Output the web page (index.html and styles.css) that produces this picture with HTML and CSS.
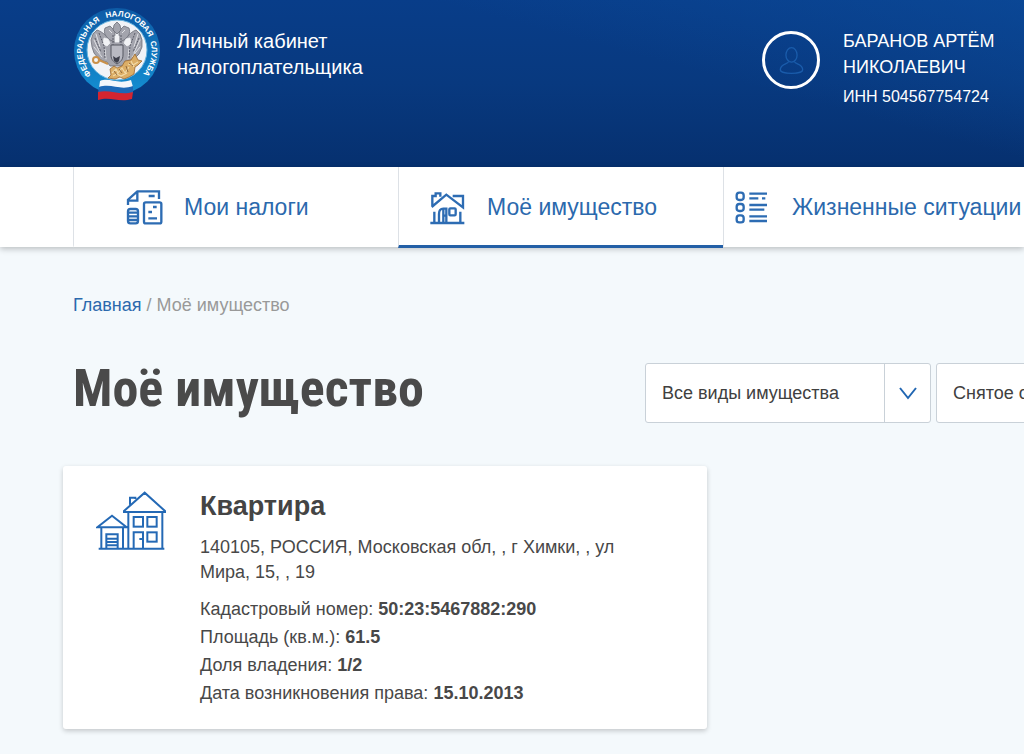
FILE: index.html
```html
<!DOCTYPE html>
<html lang="ru">
<head>
<meta charset="utf-8">
<meta name="viewport" content="width=device-width, initial-scale=1">
<title>Моё имущество</title>
<link rel="stylesheet" href="styles.css">
</head>
<body>
<header class="header">
  <a class="brand" href="#">
    <svg class="emblem" viewBox="0 0 90 94" aria-hidden="true">
      <defs>
        <path id="ring" d="M20.500 69.500A34.600 34.600 0 1 1 69.500 69.500"/>
        <linearGradient id="rim" x1="0" y1="0" x2="0" y2="1"><stop offset="0" stop-color="#0d5ba6"/><stop offset="1" stop-color="#148fd2"/></linearGradient>
      </defs>
      <circle cx="45" cy="45" r="43" fill="url(#rim)"/>
      <circle cx="45" cy="44" r="30" fill="#f1f3f7" stroke="#69b5e0" stroke-width="1"/>
      <text class="emblem-text"><textPath href="#ring" startOffset="20%">ФЕДЕРАЛЬНАЯ</textPath></text>
      <text class="emblem-text"><textPath href="#ring" startOffset="59%">НАЛОГОВАЯ</textPath></text>
      <text class="emblem-text"><textPath href="#ring" startOffset="88%">СЛУЖБА</textPath></text>
      <g fill="#a3a4ad" stroke="#62646f" stroke-width=".7" stroke-linejoin="round">
        <path d="M41 34C36 33 32 26 25 24L21 28 19 34 20 41 22 47 26 52 31 55 35 56 38 60H52L56 56 62 53 67 48 70 41 70 34 68 28 64 24C58 26 54 33 49 34Z"/>
        <path d="M38 34C34 31 31 27 33 22L38 20 43 25 43 36ZM52 34C56 31 59 27 57 22L52 20 47 25 47 36Z"/>
        <path d="M41 24 42 19 45 16 48 19 49 24 45 28Z"/>
      </g>
      <path d="m32 32 4 1 2 4-3 3-4-2ZM58 32l-4 1-2 4 3 3 4-2ZM37 24l3 3M53 24l-3 3M43 30h4v6h-4Z" fill="#f1f2f5" stroke="#f1f2f5" stroke-width=".8"/>
      <g fill="none" stroke="#dfe0e4" stroke-width="1" stroke-linecap="round">
        <path d="M24 28 28 41M22 34 28 47M22 41 30 51M66 28 62 41M68 34 62 47M68 41 60 51M33 43 34 53M57 43 56 53"/>
      </g>
      <g fill="none" stroke="#5b5d69" stroke-width="1" stroke-dasharray="2 1">
        <path d="M27 27 32 40 33 52M23 32 29 46M63 27 58 40 57 52M67 32 61 46M41 29v10M49 29v10"/>
      </g>
      <path d="M39 39h12v10c0 5-3 7-6 9-3-2-6-4-6-9Z" fill="#b9bac3" stroke="#545660"/>
      <path d="m41 50 3 2 4-2-1 5-2 2-3-2Z" fill="#3e404c"/>
      <g fill="#dcae66" stroke="#9b6830" stroke-width=".8" stroke-linejoin="round">
        <path d="m38 63 4-3 3 2 5-2 3-5 6-1 4-6 3 6 4 1-4 4-3 2-1 7-5 3-5 2-4-2-5 2-7-1 3-3Z"/>
      </g>
      <path d="m40 67 4-4 2 4 4-5 3 5 4-6M41 70l4-2 4 2 6-3M56 58l5 1 5-3M59 55l3 6" fill="none" stroke="#f1d9a6" stroke-width="1.200"/>
      <path d="m42 65 3 4m2-6 3 4m4-7 2 6m1-9 4 3" fill="none" stroke="#7e5730" stroke-width=".8"/>
      <g fill="none" stroke="#c99049" stroke-width="2">
        <circle cx="24" cy="54" r="3"/>
        <path d="m27 54 9 4"/>
      </g>
      <path d="M28 75c10-4 17 4 31-1l2 7c-12 4-21-3-34 1Z" fill="#f3f6fb"/>
      <path d="M27 81c13-4 21 4 34-1l0 7c-13 4-22-3-35 0Z" fill="#1d68b6"/>
      <path d="M26 86c12-3 22 4 35 0l-1 7c-14 4-21-3-34 1Z" fill="#d42530"/>
    </svg>
    <span class="brand-name">Личный кабинет<br>налогоплательщика</span>
  </a>
  <div class="user">
    <button class="avatar" type="button" aria-label="Профиль">
      <svg viewBox="112 90 76 88" aria-hidden="true"><ellipse cx="150" cy="117" rx="17" ry="22"/><path d="M141 137c0 9-25 6-25 25 0 15 68 15 68 0 0-19-25-16-25-25"/></svg>
    </button>
    <div class="user-info">
      <div class="user-name">БАРАНОВ АРТЁМ НИКОЛАЕВИЧ</div>
      <div class="user-inn">ИНН 504567754724</div>
    </div>
  </div>
</header>
<nav class="nav" aria-label="Разделы">
  <a class="tab tab-taxes" href="#">
    <svg class="tab-icon" viewBox="200 86 114 111" aria-hidden="true"><path d="M206 134V118L234 93H299V116M234 93V121H206M268 107H286M281 140H292M267 155H278M267 174H293M206 157H236M206 168H236M206 179H236"/><rect x="254" y="126" width="52" height="63" rx="5"/><rect x="206" y="146" width="30" height="43" rx="7"/></svg>
    <span>Мои налоги</span>
  </a>
  <a class="tab tab-property" href="#" aria-current="page">
    <svg class="tab-icon" viewBox="118 86 114 111" aria-hidden="true"><path d="M122 188H224M134 154V186M212 154V186M128 138V107H138V99H152V109M126 140 170 103 220 141V107H189M148 187V161Q148 145 161 145H170V187M161 147V187M161 166H170"/><rect x="179" y="144" width="19" height="21" rx="3"/></svg>
    <span>Моё имущество</span>
  </a>
  <a class="tab tab-events" href="#">
    <svg class="tab-icon" viewBox="77 86 114 111" aria-hidden="true"><rect x="82" y="97" width="21" height="22" rx="8"/><rect x="82" y="131" width="21" height="21" rx="8"/><rect x="82" y="165" width="21" height="21" rx="8"/><path d="M120 100H173M120 114H147M158 114H168M120 134H173M120 148H165M120 168H173M120 182H173"/></svg>
    <span>Жизненные ситуации</span>
  </a>
</nav>
<main class="main">
  <nav class="crumbs" aria-label="Навигация"><a href="#">Главная</a> / <span>Моё имущество</span></nav>
  <div class="title-row">
    <h1>Моё имущество</h1>
    <div class="filters">
      <div class="filter">
        <select aria-label="Вид имущества"><option>Все виды имущества</option></select>
        <span class="filter-arrow"><svg viewBox="0 0 20 14" aria-hidden="true"><path d="M2 2 10 12 18 2"/></svg></span>
      </div>
      <div class="filter">
        <select aria-label="Состояние учёта"><option>Снятое с учёта</option></select>
        <span class="filter-arrow"><svg viewBox="0 0 20 14" aria-hidden="true"><path d="M2 2 10 12 18 2"/></svg></span>
      </div>
    </div>
  </div>
  <article class="card">
    <svg class="card-icon" viewBox="122 108 210 180" aria-hidden="true"><path d="M206 168 268 113 329 168V171H206ZM224 149V128H240V132M219 172V279M321 172V279M130 281H327M126 217 170 182 214 217ZM138 219V280M203 219V280M153 280V238H187V280M153 251H187M153 261H187M153 271H187M235 280V232H263V280M252 252H263"/><rect x="235" y="186" width="28" height="29"/><rect x="276" y="186" width="28" height="29"/><rect x="276" y="232" width="28" height="28"/></svg>
    <div>
      <h2>Квартира</h2>
      <p class="address">140105, РОССИЯ, Московская обл, , г Химки, , ул Мира, 15, , 19</p>
      <dl class="facts">
        <div><dt>Кадастровый номер:</dt> <dd>50:23:5467882:290</dd></div>
        <div><dt>Площадь (кв.м.):</dt> <dd>61.5</dd></div>
        <div><dt>Доля владения:</dt> <dd>1/2</dd></div>
        <div><dt>Дата возникновения права:</dt> <dd>15.10.2013</dd></div>
      </dl>
    </div>
  </article>
</main>
</body>
</html>
```
FILE: styles.css
```css
* { box-sizing: border-box; }
body {
  margin: 0;
  background: #f4f9fc;
  color: #484848;
  font: 18px/25px "Liberation Sans", Arial, sans-serif;
}
h1, h2, p, dl, dd { margin: 0; }
a { color: #2b69ad; text-decoration: none; }
svg { display: block; flex: none; }

.header {
  display: flex;
  justify-content: space-between;
  align-items: flex-start;
  min-height: 167px;
  padding: 6px 23px 0 72px;
  color: #fff;
  background:
    linear-gradient(195deg, rgba(12, 77, 157, .6) 0%, rgba(12, 77, 157, 0) 36%),
    linear-gradient(180deg, #083d89 0%, #08397f 50%, #06306f 100%);
}
.brand { display: flex; gap: 15px; color: #fff; }
.emblem { width: 90px; height: 94px; overflow: visible; }
.emblem-text { fill: #fff; font: bold 8px "Liberation Sans", Arial, sans-serif; text-anchor: middle; }
.brand-name { padding-top: 22px; font-size: 20px; line-height: 26px; }
.user { display: flex; gap: 23px; padding-top: 22px; }
.avatar {
  display: flex;
  justify-content: center;
  align-items: center;
  width: 58px;
  height: 58px;
  margin-top: 3px;
  padding: 0;
  border: 3px solid #fff;
  border-radius: 50%;
  background: none;
}
.avatar svg { width: 25px; height: 29px; fill: none; stroke: #1a5cab; stroke-width: 4; }
.user-info { width: 158px; }
.user-name { line-height: 26px; }
.user-inn { margin-top: 4px; font-size: 16px; white-space: nowrap; }

.nav {
  position: relative;
  display: flex;
  height: 80px;
  padding-left: 73px;
  background: #fff;
  box-shadow: 0 2px 6px rgba(0, 0, 0, .24);
}
.tab {
  display: flex;
  flex: none;
  align-items: center;
  gap: 20px;
  width: 325px;
  height: 81px;
  padding-top: 2px;
  border-left: 1px solid #dde1e6;
  border-bottom: 3px solid transparent;
  font-size: 23px;
  white-space: nowrap;
}
.tab-icon { width: 38px; height: 37px; fill: none; stroke: #2d6cb3; stroke-width: 7; }
.tab-taxes { padding-left: 52px; }
.tab-property { padding-left: 30px; border-bottom-color: #235fa6; }
.tab-events { flex: 0 1 325px; min-width: 0; padding-left: 11px; gap: 19px; }

.main { overflow: hidden; padding: 46px 0 26px 63px; }
.crumbs { padding-left: 10px; color: #999; }
.title-row {
  display: flex;
  justify-content: space-between;
  align-items: center;
  width: 1159px;
  margin-top: 27px;
  padding-left: 10px;
}
h1 {
  color: #4a4a4a;
  font: bold 52px/88px "Roboto Condensed", "Open Sans Condensed", sans-serif;
}
.filters { display: flex; gap: 5px; padding-top: 8px; }
.filter { position: relative; width: 286px; }
.filter select {
  width: 100%;
  height: 60px;
  padding: 0 60px 0 16px;
  border: 1px solid #c9d1d8;
  border-radius: 3px;
  appearance: none;
  background: #fff;
  color: #404040;
  font: inherit;
}
.filter-arrow {
  position: absolute;
  inset: 1px 1px 1px auto;
  display: flex;
  justify-content: center;
  align-items: center;
  width: 46px;
  border-left: 1px solid #c9d1d8;
  pointer-events: none;
}
.filter-arrow svg { width: 20px; height: 14px; fill: none; stroke: #2166b2; stroke-width: 2; }

.card {
  display: flex;
  gap: 34px;
  width: 644px;
  max-width: 100%;
  margin-top: 33px;
  padding: 24px 64px 22px 33px;
  background: #fff;
  border-radius: 3px;
  box-shadow: 0 2px 5px rgba(0, 0, 0, .2);
}
.card-icon { width: 70px; height: 60px; margin-top: 1px; fill: none; stroke: #2469b5; stroke-width: 6; }
h2 { color: #444; font-size: 27px; line-height: 32px; }
.address { margin-top: 13px; }
.facts { margin-top: 10px; line-height: 28px; }
.facts dt, .facts dd { display: inline; }
.facts dd { font-weight: bold; }
```
